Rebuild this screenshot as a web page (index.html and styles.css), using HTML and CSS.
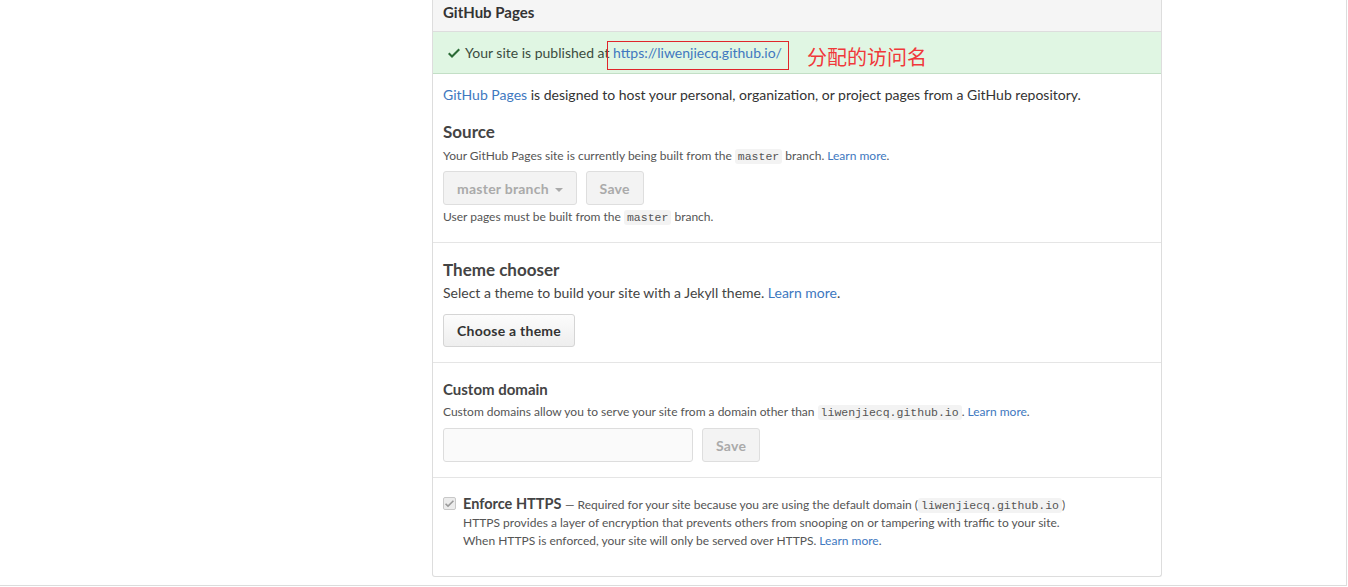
FILE: index.html
```html
<!DOCTYPE html>
<html lang="en">
<head>
<meta charset="utf-8">
<title>GitHub Pages settings</title>
<link rel="stylesheet" href="styles.css">
</head>
<body>
<div class="page">
  <div class="box">
    <div class="box-header">GitHub Pages</div>
    <div class="flash">
      <svg class="check" width="12" height="12" viewBox="0 2 12 12" aria-hidden="true"><path d="M12 5l-8 8-4-4 1.5-1.5L4 10l6.5-6.5L12 5z" fill="#2b6a36"/></svg>
      <span>Your site is published at </span><span class="link-wrap"><a class="flash-link" href="#">https://liwenjiecq.github.io/</a><span class="annot-box"></span><span class="annot-text">分配的访问名</span></span>
    </div>
    <div class="section">
      <p class="lead"><a href="#">GitHub Pages</a> is designed to host your personal, organization, or project pages from a GitHub repository.</p>
      <h3 class="h-big src">Source</h3>
      <p class="note">Your GitHub Pages site is currently being built from the <code>master</code> branch. <a href="#">Learn more</a>.</p>
      <div class="btn-row">
        <button class="btn disabled">master branch <span class="caret"></span></button>
        <button class="btn disabled">Save</button>
      </div>
      <p class="note after">User pages must be built from the <code>master</code> branch.</p>
    </div>
    <div class="section theme">
      <h3 class="h-big">Theme chooser</h3>
      <p class="text">Select a theme to build your site with a Jekyll theme. <a href="#">Learn more</a>.</p>
      <button class="btn choose">Choose a theme</button>
    </div>
    <div class="section domain">
      <h3 class="h-small">Custom domain</h3>
      <p class="note">Custom domains allow you to serve your site from a domain other than <code>liwenjiecq.github.io</code>. <a href="#">Learn more</a>.</p>
      <div class="btn-row">
        <input class="field" type="text" disabled>
        <button class="btn disabled">Save</button>
      </div>
    </div>
    <div class="section https">
      <div class="check-row">
        <span class="cbox"><svg width="9" height="9" viewBox="0 2 12 12" aria-hidden="true"><path d="M12 5l-8 8-4-4 1.5-1.5L4 10l6.5-6.5L12 5z" fill="#9a9a9a"/></svg></span>
        <div class="check-body">
          <p class="line"><strong class="enf">Enforce HTTPS</strong> <span class="note-inline">— Required for your site because you are using the default domain (<code>liwenjiecq.github.io</code>)</span></p>
          <p class="line note-inline">HTTPS provides a layer of encryption that prevents others from snooping on or tampering with traffic to your site.</p>
          <p class="line note-inline">When HTTPS is enforced, your site will only be served over HTTPS. <a href="#">Learn more</a>.</p>
        </div>
      </div>
    </div>
  </div>
</div>
</body>
</html>
```

FILE: styles.css
```css
* { box-sizing: border-box; }
html, body { margin: 0; padding: 0; background: #fff; }
body {
  font-family: "Lato", "Open Sans", Arial, sans-serif;
  font-size: 14px;
  color: #333;
}
a { color: #4078c0; text-decoration: none; }
p, h3 { margin: 0; }

.page {
  width: 1347px;
  height: 586px;
  border-right: 1px solid #dcdcdc;
  border-bottom: 1px solid #dcdcdc;
  overflow: hidden;
}

.box {
  margin-left: 432px;
  width: 730px;
  border: 1px solid #ddd;
  border-top: none;
  border-radius: 0 0 3px 3px;
}

.box-header {
  height: 32px;
  padding: 0 10px;
  line-height: 25px;
  background: #f5f5f5;
  border-bottom: 1px solid #ddd;
  font-size: 15px;
  font-weight: 700;
  color: #333;
}

.flash {
  display: flex;
  align-items: center;
  height: 42px;
  padding: 0 10px 0 15px;
  background: #e0f6e3;
  border-bottom: 1px solid #c3dfc6;
  color: #3b4c3f;
  white-space: pre;
}
.check { margin-right: 5px; }
.link-wrap { position: relative; }
.annot-box {
  position: absolute;
  left: -6px;
  top: -3px;
  width: 182px;
  height: 29px;
  border: 1px solid #e0262a;
}
.annot-text {
  position: absolute;
  left: 194px;
  top: 1px;
  font-family: "Noto Sans CJK SC", sans-serif;
  font-size: 20px;
  line-height: 24px;
  color: #f0383a;
}

.section {
  padding: 0 10px;
  border-bottom: 1px solid #e5e5e5;
}
.section:last-child { border-bottom: none; }

.lead { padding-top: 11px; line-height: 20px; }
.h-big { font-size: 17px; line-height: 20px; font-weight: 700; color: #444; }
.h-big.src { margin-top: 17px; }
.h-small { font-size: 15px; line-height: 20px; font-weight: 700; color: #444; }

.note { font-size: 12px; line-height: 18px; color: #555; margin-top: 5px; }
.note.after { margin-top: 3px; padding-bottom: 16px; }

code {
  font-family: "Liberation Mono", "DejaVu Sans Mono", monospace;
  font-size: 11.5px;
  line-height: 1;
  background: #f3f3f3;
  border-radius: 3px;
  padding: 1px 3px;
  color: #555;
}

.btn-row { display: flex; gap: 9px; margin-top: 6px; }
.btn {
  height: 34px;
  padding: 0 13px;
  font-family: inherit;
  font-size: 14px;
  font-weight: 700;
  letter-spacing: 0.25px;
  color: #333;
  background: linear-gradient(#fcfcfc, #eee);
  border: 1px solid #d5d5d5;
  border-radius: 3px;
}
.btn.disabled {
  color: #aaa;
  background: #f3f3f3;
  border-color: #dedede;
}
.caret {
  display: inline-block;
  width: 0; height: 0;
  border-left: 4px solid transparent;
  border-right: 4px solid transparent;
  border-top: 4px solid #aaa;
  vertical-align: middle;
  margin-left: 2px;
}

.theme { padding-top: 17px; padding-bottom: 15px; }
.text { margin-top: 3px; line-height: 20px; color: #444; }
.btn.choose { margin-top: 11px; height: 33px; }

.domain { padding-top: 16px; padding-bottom: 15px; }
.domain .note { margin-top: 4px; }
.domain .btn-row { margin-top: 7px; }
.field {
  width: 250px;
  height: 34px;
  background: #fafafa;
  border: 1px solid #ddd;
  border-radius: 3px;
}

.https { padding-top: 17px; padding-bottom: 26px; }
.check-row { display: flex; gap: 7px; }
.cbox {
  flex: none;
  width: 13px;
  height: 13px;
  margin-top: 2px;
  border: 1px solid #c8c8c8;
  border-radius: 2px;
  background: #ececec;
  display: flex;
  align-items: center;
  justify-content: center;
}
.line { line-height: 18px; }
.enf { font-size: 14.5px; line-height: 18px; color: #444; }
.note-inline { font-size: 12px; color: #555; }
```
